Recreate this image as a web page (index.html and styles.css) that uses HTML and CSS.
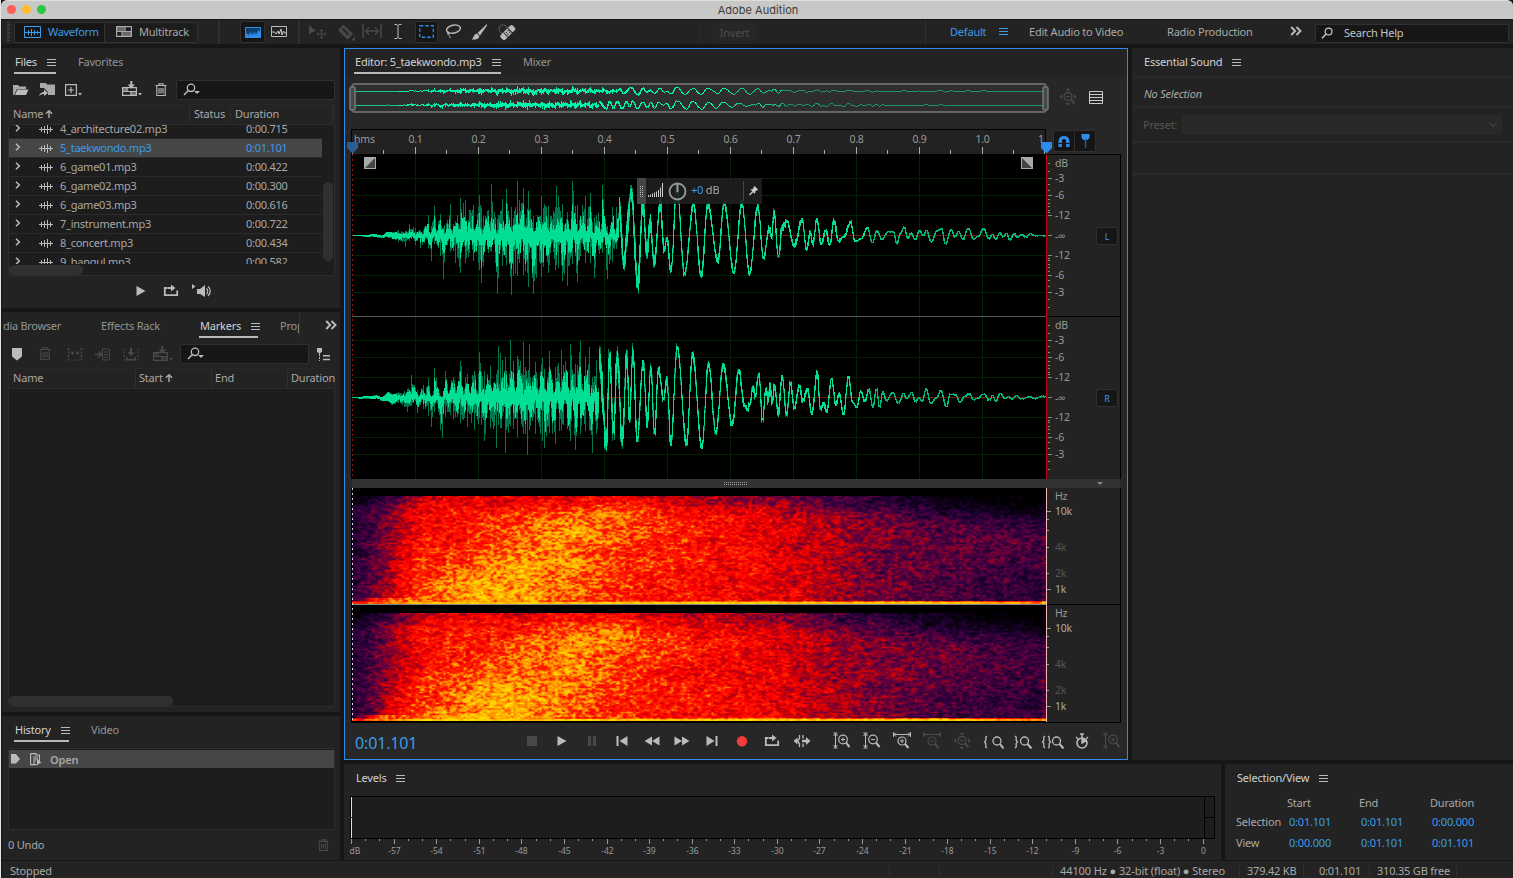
FILE: index.html
```
<!DOCTYPE html>
<html lang="en">
<head>
<meta charset="utf-8">
<title>Adobe Audition</title>
<link rel="stylesheet" href="styles.css">
</head>
<body>
<svg class="defs" aria-hidden="true">
  <symbol id="menu" viewBox="0 0 9 9"><path d="M0 1.5h9M0 4.5h9M0 7.5h9" stroke="currentColor"/></symbol>
  <symbol id="up" viewBox="0 0 9 10"><path d="M4.5 9.5V2M1 4.8 4.5 1.3 8 4.8" fill="none" stroke="currentColor" stroke-width="1.7"/></symbol>
  <symbol id="chev" viewBox="0 0 6 8"><path d="M1 .8 4.3 4 1 7.2" fill="none" stroke="currentColor" stroke-width="1.5"/></symbol>
  <symbol id="more" viewBox="0 0 12 10"><path d="M1.2 1l4 4-4 4M6.5 1l4 4-4 4" fill="none" stroke="currentColor" stroke-width="1.9"/></symbol>
  <symbol id="wave" viewBox="0 0 14 10"><path d="M0 5.5h14M2.5 3v5M5.5 2v7M8.5 1v9M11.5 3v5" stroke="currentColor" fill="none"/></symbol>
  <symbol id="search" viewBox="0 0 18 14"><circle cx="8" cy="4.800" r="3.700" fill="none" stroke="currentColor" stroke-width="1.3"/><path d="M5.300 7.500 1 12" stroke="currentColor" stroke-width="1.600"/></symbol>
  <symbol id="searchdrop" viewBox="0 0 18 14"><use href="#search" width="18" height="14"/><path d="M11 8h6l-3 3z" fill="currentColor"/></symbol>
  <symbol id="trash" viewBox="0 0 12 14"><path d="M.5 2.500h11M4 2V.7h4V2M1.800 3v9.500h8.400V3M4 5v5.500M6 5v5.500M8 5v5.500" fill="none" stroke="currentColor" stroke-width="1.100"/></symbol>
  <symbol id="tracks" viewBox="0 0 16 11"><path d="M.6.6h14.800v9.800H.6zM.6 5.500h14.800M9 .6v4.900M6 5.500v4.900" fill="none" stroke="currentColor" stroke-width="1.200"/><path d="M1 1h7.500v4H1zM6.500 6h8.500v4H6.500z" fill="currentColor" opacity=".55"/></symbol>
  <symbol id="insert" viewBox="0 0 20 16"><path d="M.6 6.600h13.800v7.800H.6zM.6 10.500h13.800M9 10.500v4M5 6.500v4" fill="none" stroke="currentColor" stroke-width="1.200"/><path d="M1 7h4v3H1zM9 11h5v3H9z" fill="currentColor" opacity=".5"/><path d="M8.300 0h2v3.500H13L9.300 7.500 5.600 3.500h2.700zM16 12h4l-2 2.500z" fill="currentColor"/></symbol>
  <symbol id="play" viewBox="0 0 16 16"><path d="M3.500 3v10L12.500 8z" fill="currentColor"/></symbol>
  <symbol id="loop" viewBox="0 0 16 16"><path d="M4.500 5H1.800v7.200h12.400V7.500M5 5h4" fill="none" stroke="currentColor" stroke-width="1.800"/><path d="M8 1.500v7L12.500 5z" fill="currentColor"/></symbol>
  <symbol id="mag" viewBox="0 0 18 18"><circle cx="10" cy="7.500" r="4.300" fill="none" stroke="currentColor" stroke-width="1.200"/><path d="M13 10.700 16.500 15" stroke="currentColor" stroke-width="2"/></symbol>
  <symbol id="vzin" viewBox="0 0 18 18"><use href="#mag" width="18" height="18"/><path d="M8 7.500h4M10 5.500v4M2.500 2v13M.5 4 2.500 1.500 4.500 4M.5 13l2 2.500 2-2.500M.5 1h4M.5 16h4" fill="none" stroke="currentColor"/></symbol>
  <symbol id="vzout" viewBox="0 0 18 18"><use href="#mag" width="18" height="18"/><path d="M8 7.500h4M2.500 2v13M.5 4 2.500 1.500 4.500 4M.5 13l2 2.500 2-2.500M.5 1h4M.5 16h4" fill="none" stroke="currentColor"/></symbol>
  <symbol id="hzin" viewBox="0 0 18 18"><circle cx="9" cy="9" r="4" fill="none" stroke="currentColor" stroke-width="1.200"/><path d="M7 9h4M9 7v4M1 2.500h16M3 .5 1 2.500l2 2M15 .5l2 2-2 2M.5 0v5M17.500 0v5" fill="none" stroke="currentColor"/><path d="M12 12l3.500 4" stroke="currentColor" stroke-width="2"/></symbol>
  <symbol id="hzout" viewBox="0 0 18 18"><circle cx="9" cy="9" r="4" fill="none" stroke="currentColor" stroke-width="1.200"/><path d="M7 9h4M1 2.500h16M3 .5 1 2.500l2 2M15 .5l2 2-2 2M.5 0v5M17.500 0v5" fill="none" stroke="currentColor"/><path d="M12 12l3.500 4" stroke="currentColor" stroke-width="2"/></symbol>
  <symbol id="zall" viewBox="0 0 18 18"><circle cx="9" cy="8.500" r="4" fill="none" stroke="currentColor" stroke-width="1.300"/><path d="M7 8.500h4" stroke="currentColor"/><path d="M12 11.500l3.500 4" stroke="currentColor" stroke-width="2"/><path d="M9 0l2.500 2.500h-5zM9 17.500l2.500-2.500h-5zM.5 8.500 3 6v5zM17.500 8.500 15 6v5z" fill="currentColor"/></symbol>
</svg>

<div class="window">
  <header class="titlebar"><span class="lights"><i class="red"></i><i class="yellow"></i><i class="green"></i></span><span class="title">Adobe Audition</span></header>

  <nav class="toolbar">
    <span class="grip"></span>
    <div class="modes">
      <button class="mode active"><svg width="17" height="12"><path d="M.5.500h16v11H.5zM1 6.500h15M4.500 4v5M7.500 3v7M10.500 4v5M13.500 5v3" fill="none" stroke="currentColor"/></svg>Waveform</button>
      <button class="mode"><svg width="16" height="11"><use href="#tracks"/></svg>Multitrack</button>
    </div>
    <span class="vsep wide"></span>
    <span class="tool on"><svg width="16" height="11"><path d="M0 0h16v11H0z" fill="#123a68"/><path d="M0 10.500V8l1-4 1 4 1-2 1 3 1-5 1 4 1-3 1 4 1-6 1 5 1-3 1 3 1-6 1 3 1-2 1 7z" fill="#2d8ceb"/><path d="M.5.500h15v10H.5z" fill="none" stroke="#2d8ceb"/></svg></span>
    <span class="tool"><svg class="raise" width="16" height="11"><path d="M.5.500h15v10H.5z" fill="none" stroke="#bbb"/><path d="M1 6h2.500l1.500 2 2-3 1 3 2-5 1 6 1.500-4 1 2H15" fill="none" stroke="#ccc"/></svg></span>
    <span class="vsep"></span>
    <span class="tool dim"><svg width="18" height="15"><path d="M1 0v10l2.500-2.500L8 6z" fill="currentColor"/><path d="M13.500 4.500v9M9 9h9M12 6l1.500-1.500L15 6M12 12l1.500 1.500L15 12M10.500 7.500 9 9l1.500 1.500M16.500 7.500 18 9l-1.500 1.500" stroke="currentColor" fill="none"/></svg></span>
    <span class="tool dim"><svg width="18" height="17"><path d="M1 6 6.500.8 16 10l-5.500 5.500z" fill="currentColor"/><path d="M5 5l2 .5.500 2 2 .5.500 2 2 .5" stroke="#232323" stroke-width="1.800" fill="none"/><path d="M14 16.500h4v-4z" fill="currentColor"/></svg></span>
    <span class="tool dim"><svg class="raise" width="20" height="14"><path d="M1 0v14M19 0v14" stroke="currentColor" stroke-width="1.500"/><path d="M4 7h12M7 3.500 3.500 7 7 10.500M13 3.500 16.500 7 13 10.500" stroke="currentColor" fill="none" stroke-width="1.300"/></svg></span>
    <span class="tool"><svg class="raise" width="8" height="15"><path d="M.5.500H3l1 1 1-1h2.500M.5 14.500H3l1-1 1 1h2.500M4 1v13" stroke="#bbb" fill="none"/></svg></span>
    <span class="tool on"><svg class="raise" width="15" height="13"><path d="M.75.750h13.500v11.500H.75z" fill="none" stroke="#2d8ceb" stroke-width="1.300" stroke-dasharray="3.500 2"/></svg></span>
    <span class="tool"><svg class="raise" width="17" height="15"><ellipse cx="8.500" cy="5" rx="7" ry="4" transform="rotate(-12 9 5)" fill="none" stroke="#bbb" stroke-width="1.400"/><path d="M3.500 8c-2 1-1 3 .5 2 1-1-.5-2-1-.5 0 2 2 1 2 4.500" fill="none" stroke="#bbb"/></svg></span>
    <span class="tool"><svg width="17" height="16"><path d="M16 0 6.500 9l2.500 2.500L16 1.500z" fill="#bbb"/><path d="M5.800 9.500 8.300 12c0 3-4 4-8 3.500 2.500-1 2-5 5.500-6z" fill="#bbb"/></svg></span>
    <span class="tool"><svg width="18" height="17"><g transform="rotate(-45 10 8)"><rect x="1" y="5" width="17" height="6.500" rx="2" fill="#bbb"/><path d="M6.500 4.500V12M12.500 4.500V12" stroke="#232323"/><path d="M8 7h1M10.500 7h1M8 9.500h1M10.500 9.500h1" stroke="#232323" stroke-width="1.400"/></g><circle cx="5" cy="5" r="4" fill="none" stroke="#bbb" stroke-dasharray="1 1.500"/></svg></span>
    <span class="vsep faint"></span>
    <span class="invert">Invert</span>
    <span class="vsep s2"></span>
    <span class="ws blue">Default</span>
    <svg class="blue raise" width="9" height="9"><use href="#menu"/></svg>
    <span class="ws">Edit Audio to Video</span>
    <span class="ws">Radio Production</span>
    <svg class="lt raise" width="12" height="10"><use href="#more"/></svg>
    <label class="field help"><svg width="17" height="13"><use href="#search"/></svg><span>Search Help</span></label>
  </nav>

  <main class="workspace">
    <div class="left">
      <section class="panel files">
        <div class="tabs"><span class="tab current t1">Files<svg width="9" height="9"><use href="#menu"/></svg></span><span class="tab t2">Favorites</span></div>
        <div class="tools files-tools">
          <svg width="16" height="12"><path d="M0 11V1h5l1.500 1.500H13V5H4L1 11z" fill="#aaa"/><path d="M4.500 5.500H15.500L13 11H1.800z" fill="#bbb"/></svg>
          <svg width="17" height="14"><path d="M1 0h6l1 1.500h8V12H9V9L5 5H1z" fill="#aaa"/><path d="M0 13c1-3 3-4 5-4V6.500l4 3.500-4 3v-2c-2 0-3 .5-5 2z" fill="#bbb"/></svg>
          <svg width="18" height="13"><path d="M.6.600h10.800v10.800H.6zM3 6h6M6 3v6" stroke="#bbb" fill="none" stroke-width="1.200"/><path d="M13 9h4l-2 2.500z" fill="#bbb"/></svg>
          <svg width="20" height="16"><use href="#insert"/></svg>
          <svg width="12" height="14"><use href="#trash"/></svg>
          <span class="field"><svg width="18" height="14"><use href="#searchdrop"/></svg></span>
        </div>
        <div class="thead fh"><span>Name <svg width="9" height="10"><use href="#up"/></svg></span><span>Status</span><span>Duration</span><span></span></div>
        <div class="list filelist">
          <div class="rows" id="rows"></div>
          <i class="vthumb"></i><i class="hthumb"></i>
        </div>
        <div class="preview"><svg width="16" height="16"><use href="#play"/></svg><svg width="16" height="16"><use href="#loop"/></svg><svg width="20" height="16"><path d="M0 1v5l3.500-2.500zM5 6h3l5-4v12L8 11H5z" fill="#bbb"/><path d="M14.500 5.500c1.500 1.500 1.500 4 0 5.500M16 3.500c3 2.500 3 6.500 0 9.500" stroke="#bbb" fill="none" stroke-width="1.300"/></svg></div>
      </section>

      <section class="panel markers">
        <div class="tabs mtabs"><span class="tab m1">dia Browser</span><span class="tab m2">Effects Rack</span><span class="tab current m3">Markers<svg width="9" height="9"><use href="#menu"/></svg></span><span class="tab m4">Properties</span><svg class="lt" width="12" height="10"><use href="#more"/></svg></div>
        <div class="tools marker-tools">
          <svg width="10" height="14"><path d="M0 1h10v8.500L5 13.500 0 9.500z" fill="#bbb"/></svg>
          <svg class="dim" width="12" height="16"><use href="#trash"/></svg>
          <svg class="dim" width="16" height="13"><path d="M1.500 0v13M14.500 0v13" stroke="currentColor" stroke-width="1.500" stroke-dasharray="2 1.500"/><path d="M4 4h3L5.500 7zM9 4h3l-1.500 3zM4 12h9" stroke="currentColor" fill="currentColor" stroke-dasharray="1 1"/></svg>
          <svg class="dim" width="15" height="13"><path d="M0 6.500h6M3.500 3.500l3 3-3 3" stroke="currentColor" stroke-width="1.500" fill="none"/><path d="M7.500 1h7v11h-7zM9 4h4M9 6.500h4M9 9h4" stroke="currentColor" fill="none"/></svg>
          <svg class="dim" width="16" height="13"><path d="M1 0v13M15 0v13" stroke="currentColor" stroke-dasharray="2 1.500"/><path d="M7 0h2v4h2.500L8 8 4.500 4H7zM3 9h1.500v2h7V9H13v3.500H3z" fill="currentColor"/></svg>
          <svg class="dim" width="20" height="16"><use href="#insert"/></svg>
          <span class="field"><svg width="18" height="14"><use href="#searchdrop"/></svg></span>
          <svg width="14" height="14"><path d="M0 1h5v3.500L2.500 7 0 4.500z" fill="#bbb"/><path d="M2.500 7v7" stroke="#bbb" stroke-dasharray="2 1"/><path d="M6 8.800h7M6 12.500h7" stroke="#bbb" stroke-width="1.600"/></svg>
        </div>
        <div class="thead mh"><span>Name</span><span>Start <svg width="9" height="10"><use href="#up"/></svg></span><span>End</span><span>Duration</span></div>
        <div class="list grow"><i class="hthumb long"></i></div>
      </section>

      <section class="panel history">
        <div class="tabs"><span class="tab current h1">History<svg width="9" height="9"><use href="#menu"/></svg></span><span class="tab h2">Video</span></div>
        <div class="list hist"><div class="hrow"><svg width="9" height="10"><path d="M0 0h5l4 5-4 4.500H0z" fill="#bbb"/></svg><svg width="12" height="13"><path d="M.6.600H6V2h3.500v6M.6.600v11h6M3 4h5M3 6h5M3 8h3M3 10h2" fill="none" stroke="#bbb" stroke-width="1.100"/><path d="M7 5.500v7l2-2 2.500-.5z" fill="#bbb"/></svg><b>Open</b></div></div>
        <div class="undo"><span>0 Undo</span><svg class="dim" width="11" height="13"><use href="#trash"/></svg></div>
      </section>
    </div>

    <div class="right">
      <div class="upper">
        <section class="panel editor">
          <div class="tabs etabs"><span class="tab current e1">Editor: 5_taekwondo.mp3<svg width="9" height="9"><use href="#menu"/></svg></span><span class="tab e2">Mixer</span></div>
          <div class="stage">
            <div class="overview"><canvas id="overview" width="700" height="53"></canvas><svg class="dim" width="18" height="18"><use href="#zall"/></svg><svg width="14" height="13"><path d="M.5.500h13v12H.5zM0 3.500h14M0 6.500h14M0 9.500h14" fill="none" stroke="#ccc"/></svg></div>
            <div class="ruler"><svg id="ruler" width="695" height="25"></svg>
              <span class="snap"><svg width="12" height="13"><path d="M2.200 12V6.200a3.800 3.800 0 0 1 7.600 0V12" fill="none" stroke="#2d8ceb" stroke-width="3.400"/><path d="M.5 8.500h3.500M8 8.500h3.500" stroke="#161616"/></svg></span><span class="snap"><svg width="9" height="14"><path d="M.5 0h8v4l-2 2h-4l-2-2z" fill="#2d8ceb"/><path d="M4.500 5v9" stroke="#2262a0" stroke-width="1.400"/></svg></span>
              <svg class="cap start" width="11" height="12"><path d="M0 0h11v6l-5.500 5.500L0 6z" fill="#2c5c92"/></svg><svg class="cap end" width="11" height="12"><path d="M0 0h11v6l-5.500 5.500L0 6z" fill="#2d8ceb"/></svg>
            </div>
            <div class="waves"><canvas id="waves" width="695" height="325"></canvas>
              <div class="scale"><svg id="db" width="73" height="325"></svg><span class="chan cl">L</span><span class="chan cr">R</span></div>
              <svg class="fade fl" width="12" height="12"><path d="M0 0h12v12H0z" fill="#aaa"/><path d="M11 1v10H1z" fill="#444"/></svg>
              <svg class="fade fr" width="12" height="12"><path d="M0 0h12v12H0z" fill="#aaa"/><path d="M1 1v10h10z" fill="#444"/></svg>
              <div class="hud"><span class="hudgrip"><i></i></span><svg width="16" height="15"><path d="M.5 14v-2M2.500 14v-2.500M4.500 14v-3.500M6.500 14v-4.500M8.500 14V8.500M10.500 14V7M12.500 14V4.500M14.500 14V0" stroke="#ccc"/></svg><svg width="19" height="19"><circle cx="9.500" cy="9.500" r="8" fill="none" stroke="#999" stroke-width="1.800"/><path d="M9.500 2v8" stroke="#999" stroke-width="2"/></svg><span class="gain"><em>+0</em> dB</span><i class="hudsep"></i><svg width="9" height="10"><path d="M5.500 0 9 3.500 8 4.500 6.500 5 6 8 1.500 3.500 4 3 4.700 1z" fill="#ccc"/><path d="M4 5.500.5 9" stroke="#ccc" stroke-width="1.300"/></svg></div>
            </div>
            <div class="splitter"><i></i><b></b></div>
            <div class="spectra"><canvas id="spectra" width="695" height="234"></canvas><svg id="hz" width="73" height="234"></svg></div>
            <div class="transport">
              <span class="time">0:01.101</span>
              <svg class="dim" width="16" height="16"><path d="M3 3h10v10H3z" fill="currentColor"/></svg>
              <svg width="16" height="16"><use href="#play"/></svg>
              <svg class="dim" width="16" height="16"><path d="M4 3h3v10H4zM9 3h3v10H9z" fill="currentColor"/></svg>
              <svg width="16" height="16"><path d="M2.500 3h2v10h-2zM13.500 3v10L5.500 8z" fill="currentColor"/></svg>
              <svg width="16" height="16"><path d="M8 3.500v9L.5 8zM15.500 3.500v9L8 8z" fill="currentColor"/></svg>
              <svg width="16" height="16"><path d="M.5 3.500v9L8 8zM8 3.500v9L15.500 8z" fill="currentColor"/></svg>
              <svg width="16" height="16"><path d="M11.500 3h2v10h-2zM2.500 3v10l8-5z" fill="currentColor"/></svg>
              <svg width="16" height="16"><circle cx="8" cy="8.300" r="5.200" fill="#f33b3b"/></svg>
              <svg width="16" height="16"><use href="#loop"/></svg>
              <svg width="18" height="16"><path d="M6.500 2v3.500L4.500 8l2 2.500V14M10 2v3.500M10 10.500V14" stroke="currentColor" fill="none" stroke-width="1.300"/><path d="M.5 8 4.500 4.500v7zM17.500 8 13 4v2.800H9v2.400h4V12z" fill="currentColor"/></svg>
              <svg class="zoomfirst" width="18" height="18"><use href="#vzin"/></svg>
              <svg width="18" height="18"><use href="#vzout"/></svg>
              <svg width="18" height="18"><use href="#hzin"/></svg>
              <svg class="dim" width="18" height="18"><use href="#hzout"/></svg>
              <svg class="dim" width="18" height="18"><use href="#zall"/></svg>
              <svg width="21" height="16"><circle cx="14" cy="8" r="4" fill="none" stroke="currentColor" stroke-width="1.300"/><path d="M17 11l3.500 4.500" stroke="currentColor" stroke-width="2"/><path d="M4 3 2.800 4v3.500L1.500 9l1.300 1.500V14L4 15" stroke="currentColor" fill="none" stroke-width="1.300"/></svg>
              <svg width="20" height="16"><circle cx="11.500" cy="8" r="4" fill="none" stroke="currentColor" stroke-width="1.300"/><path d="M14.500 11l4 4.500" stroke="currentColor" stroke-width="2"/><path d="M2 3l1.200 1v3.500L4.500 9l-1.300 1.500V14L2 15" stroke="currentColor" fill="none" stroke-width="1.300"/></svg>
              <svg width="23" height="16"><circle cx="15.500" cy="8" r="4" fill="none" stroke="currentColor" stroke-width="1.300"/><path d="M18.500 11l4 4.500" stroke="currentColor" stroke-width="2"/><path d="M4 3 2.800 4v3.500L1.500 9l1.300 1.500V14L4 15M7 3l1.200 1v3.500L9.500 9l-1.300 1.500V14L7 15" stroke="currentColor" fill="none" stroke-width="1.300"/></svg>
              <svg width="16" height="17"><circle cx="8" cy="10" r="5" fill="none" stroke="currentColor" stroke-width="1.600"/><path d="M6 1h4M8 1v4M8 10V5.500L12 8zM2 4l2 2M14 4l-2 2" stroke="currentColor" fill="currentColor" stroke-width="1.400"/></svg>
              <svg class="dim" width="18" height="18"><use href="#vzin"/></svg>
            </div>
          </div>
        </section>
        <section class="panel essential">
          <div class="tabs"><span class="tab current plain">Essential Sound<svg width="9" height="9"><use href="#menu"/></svg></span></div>
          <div class="nosel">No Selection</div>
          <div class="preset"><span>Preset:</span><span class="select"><svg width="8" height="6"><path d="M.5.500 4 4.500 7.500.5" fill="none" stroke="#484848"/></svg></span></div>
          <div class="rest"></div>
        </section>
      </div>
      <div class="lower">
        <section class="panel levels">
          <div class="tabs"><span class="tab current plain">Levels<svg width="9" height="9"><use href="#menu"/></svg></span></div>
          <div class="meter"><div class="bars"><i></i><i></i></div><div class="clips"><i></i><i></i></div></div>
          <svg id="levels" width="877" height="21"></svg>
        </section>
        <section class="panel selview">
          <div class="tabs"><span class="tab current plain">Selection/View<svg width="9" height="9"><use href="#menu"/></svg></span></div>
          <div class="svgrid"><span></span><span>Start</span><span>End</span><span>Duration</span>
            <span>Selection</span><em>0:01.101</em><em>0:01.101</em><em>0:00.000</em>
            <span>View</span><em>0:00.000</em><em>0:01.101</em><em>0:01.101</em></div>
        </section>
      </div>
    </div>
  </main>
  <footer class="status"><span>Stopped</span><i></i><i></i><i></i><span class="format">44100 Hz ● 32-bit (float) ● Stereo</span><i></i><span>379.42 KB</span><i></i><span>0:01.101</span><i></i><span>310.35 GB free</span><i></i></footer>
</div>
<script src="app.js"></script>
</body>
</html>
```

FILE: styles.css
```
* { box-sizing: border-box; }
body { margin: 0; width: 1513px; height: 878px; overflow: hidden; background: #171717; font: 11px/14px "Noto Sans", "Open Sans", sans-serif; letter-spacing: -.2px; color: #a8a8a8; }
svg, canvas { display: block; flex: none; }
i, em { font-style: normal; }
.defs { position: absolute; width: 0; height: 0; }
.window { width: 1513px; height: 878px; display: flex; flex-direction: column; border-left: 1px solid #e6e6e6; background: #171717; overflow: hidden; }
.titlebar { height: 19px; margin-bottom: 1px; padding-bottom: 1px; flex: none; display: grid; grid-template-columns: 60px 1fr 60px; align-items: center; background: #c8c8c6; border-top: 1px solid #dededc; border-radius: 6px 6px 0 0; }
.lights { display: flex; gap: 6px; padding-left: 6px; }
.lights i { width: 9px; height: 9px; border-radius: 50%; }
.red { background: #ff5f57; } .yellow { background: #febc2e; } .green { background: #28c840; }
.title { text-align: center; color: #3c3c3c; font: 11px/14px Inter, sans-serif; letter-spacing: .05px; padding-left: 2px; }
.blue { color: #3c9be6; } .lt { color: #bbb; } .dim { color: #494949; }

.toolbar { height: 24px; flex: none; margin: 0 0 4px 1px; background: #232323; display: grid; align-items: center;
  grid-template-columns: 12px 184px 42px 25px 28px 12px 24px 34px 18px 34px 23px 30px 22px 34px 182px 57px 187px 49px 30px 138px 123px 25px 1fr; }
.toolbar > * { min-width: 0; }
.raise { margin-bottom: 2px; }
.grip { width: 3px; height: 20px; margin-left: 5px; background: repeating-linear-gradient(#444 0 1px, transparent 1px 2px); }
.modes { display: flex; height: 21px; border: 1px solid #323232; border-radius: 2px; }
.mode { width: 90px; flex: none; display: flex; align-items: center; gap: 7px; padding: 0 0 1px 9px; border: 0; background: #1d1d1d; font: inherit; font-size: 11px; letter-spacing: -.2px; color: #a8a8a8; }
.mode.active { background: #161616; border-right: 1px solid #323232; color: #3c9be6; letter-spacing: -.3px; }
.mode + .mode { width: 92px; padding-left: 11px; }
.vsep { width: 2px; height: 24px; background: #2f2f2f; justify-self: center; }
.vsep.faint { justify-self: end; margin-right: 6px; width: 1px; background: #292929; }
.vsep.s2 { justify-self: end; margin-right: 24px; width: 1px; }
.tool { height: 22px; display: flex; align-items: center; justify-content: center; }
.tool.on { background: #151515; border: 1px solid #303030; border-radius: 2px; }
.invert { height: 18px; margin: 0 5px; border-radius: 9px; background: #272727; text-align: center; line-height: 19px; color: #4c4c4c; }
.ws { white-space: nowrap; }
.field { display: flex; align-items: center; height: 20px; background: #161616; border: 1px solid #303030; border-radius: 2px; padding-left: 6px; color: #bbb; }
.help { height: 19px; margin-right: 4px; gap: 6px; padding: 0 0 0 5px; margin-top: 2px; color: #c4c4c4; }

.workspace { flex: none; height: 812px; display: flex; gap: 4px; margin-left: 1px; }
.panel { background: #232323; display: flex; flex-direction: column; overflow: hidden; }
.left { width: 338px; display: flex; flex-direction: column; gap: 4px; flex: none; }
.files { height: 260px; } .markers { height: 400px; } .history { height: 144px; }
.tabs { height: 28px; flex: none; display: flex; align-items: stretch; white-space: nowrap; padding-left: 12px; }
.tab { height: 26px; padding: 7px 1px 0; display: flex; gap: 10px; color: #939393; }
.tab svg { margin-top: 3px; color: #bbb; }
.current { color: #d2d2d2; border-bottom: 2px solid #bababa; }
.plain { border: 0; padding-left: 0; }
.t1 { width: 42px; justify-content: space-between; } .t2 { margin-left: 21px; }
.tools { align-items: center; height: 28px; flex: none; color: #bbb; }
.tools .field { width: 100%; }
.files-tools { display: flex; padding-left: 11px; }
.files-tools > :nth-child(2) { margin-left: 10px; }
.files-tools > :nth-child(3) { margin-left: 9px; }
.files-tools > :nth-child(4) { margin: -2px 0 0 39px; }
.files-tools > :nth-child(5) { margin-left: 13px; }
.files-tools .field { width: 159px; margin-left: 9px; }
.thead { margin: 0 5px 0 6px; height: 20px; flex: none; display: grid; align-items: center; border: 1px solid #282828; border-bottom: 0; }
.thead span { padding-left: 4px; height: 17px; line-height: 17px; display: flex; gap: 2px; align-items: center; border-right: 1px solid #2f2f2f; padding-bottom: 2px; }
.thead span:last-child { border: 0; }
.thead svg { width: 8px; }
.fh { grid-template-columns: 181px 41px 102px 1fr; }
.mh { grid-template-columns: 127px 76px 76px 1fr; }
.mh span + span { padding-left: 3px; }
.list { position: relative; margin: 0 5px 0 6px; background: #1d1d1d; border: 1px solid #2d2d2d; border-radius: 2px; overflow: hidden; }
.filelist { height: 152px; flex: none; }
.rows { height: 139px; overflow: hidden; width: 313px; }
.row { height: 19px; display: grid; grid-template-columns: 24px 21px 186px 1fr; align-items: center; border-bottom: 1px solid #2b2b2b; padding-left: 6px; white-space: nowrap; line-height: 18px; letter-spacing: -.25px; }
.row:first-child { margin-top: -5px; }
.row.sel { background: #464646; color: #3c9be6; }
.row svg { color: #bbb; } .row svg:first-child { margin-top: -3px; }
.vthumb { position: absolute; right: 1px; top: 57px; width: 10px; height: 79px; border-radius: 5px; background: #303030; }
.hthumb { position: absolute; left: 0; bottom: 0; width: 74px; height: 10px; border-radius: 5px; background: #303030; }
.long { width: 164px; }
.preview { display: flex; gap: 14px; padding: 7px 0 0 131px; color: #bbb; }
.preview > :last-child { margin-left: -1px; }
.mtabs { padding: 0; position: relative; }
.m1 { width: 98px; padding-left: 1px; letter-spacing: -.3px; } .m2 { width: 99px; } .m3 { width: 59px; justify-content: space-between; } .m4 { width: 21px; margin-left: 21px; padding-right: 0; overflow: hidden; margin-right: 24px; }
.m3 svg { margin-right: 1px; }
.mtabs > svg { margin: 8px 0 0 1px; }
.mtabs .m4 { border-right: 1px solid #303030; }
.marker-tools { display: grid; justify-items: center; grid-template-columns: 28px 28px 31px 25px 31px 33px 130px 29px; justify-content: start; padding-left: 1px; }
.marker-tools .field { margin-left: 1px; width: 129px; }
.grow { flex: 1; margin-bottom: 5px; }
.h1 { width: 55px; justify-content: space-between; } .h2 { margin-left: 21px; }
.hist { height: 82px; margin-top: 4px; }
.hrow { margin-top: 1px; height: 18px; display: flex; align-items: center; background: #464646; padding-left: 2px; gap: 10px; }
.hrow b { font-weight: 600; font-size: 11px; margin: 2px 0 0 -2px; }
.undo { display: flex; justify-content: space-between; align-items: center; padding: 8px 11px 0 6px; }

.right { width: 1169px; flex: none; display: flex; flex-direction: column; gap: 4px; }
.upper { height: 712px; display: flex; gap: 4px; }
.editor { width: 784px; border: 1px solid #2d8ceb; flex: none; }
.etabs { height: 27px; padding-left: 9px; }
.etabs .tab { height: 25px; padding-top: 6px; letter-spacing: -.23px; }
.e1 { width: 147px; justify-content: space-between; } .e2 { margin-left: 21px; }
.stage { background: #272727; flex: 1; }
.overview { display: flex; padding-left: 4px; }
.overview svg:nth-child(2) { margin: 12px 0 0 10px; } .overview svg:nth-child(3) { margin: 15px 0 0 12px; }
.ruler { margin-left: 6px; display: flex; position: relative; height: 25px; }
#ruler { border: 1px solid #000; border-width: 1px 1px 0 1px; background: #222; }
.snap { width: 22px; height: 22px; margin: 1px 0 0 7px; background: #151515; border: 1px solid #303030; border-radius: 2px; display: flex; align-items: center; justify-content: center; }
.snap + .snap { margin-left: -1px; }
.cap { position: absolute; top: 13px; } .cap.start { left: -4px; } .cap.end { left: 690px; }
.waves, .spectra { margin-left: 6px; display: flex; position: relative; border-left: 1px solid #000; }
.scale { position: relative; border-right: 1px solid #000; border-top: 1px solid #000; height: 325px; background: #232323; }
.chan { position: absolute; left: 49px; width: 22px; height: 18px; border: 1px solid #303030; border-radius: 2px; background: #161616; color: #3c9be6; font-size: 9px; line-height: 17px; text-align: center; }
.cl { top: 72px; } .cr { top: 234px; }
.fade { position: absolute; top: 3px; } .fl { left: 12px; } .fr { left: 669px; }
.hud { position: absolute; left: 285px; top: 24px; width: 125px; height: 26px; background: rgba(32,32,32,.88); display: flex; align-items: center; }
.hudgrip { width: 9px; height: 26px; background: #444; padding: 8px 3px; margin-right: 2px; }
.hudgrip i { display: block; width: 3px; height: 11px; background: linear-gradient(90deg, transparent 1px, #444 1px 2px, transparent 2px), repeating-linear-gradient(#bbb 0 1px, transparent 1px 2px); }
.hud svg:nth-of-type(1) { margin-top: -2px; }
.hud svg:nth-of-type(2) { margin-left: 4px; }
.gain { margin: -2px 0 0 4px; width: 52px; white-space: nowrap; } .gain em { color: #3c9be6; }
.hudsep { width: 1px; height: 20px; background: #444; margin-right: 5px; }
.splitter { margin-left: 7px; width: 768px; height: 9px; background: #333; display: flex; align-items: center; }
.splitter i { width: 24px; height: 3px; margin-left: 372px; background: linear-gradient(transparent 1px, #333 1px 2px, transparent 2px), repeating-linear-gradient(90deg, #999 0 1px, transparent 1px 2px); }
.splitter b { margin-left: 349px; border: 3px solid transparent; border-top-color: #888; border-bottom: 0; }
.spectra { width: 770px; border: 1px solid #000; border-top: 0; background: #232323; height: 235px; }
.transport { height: 36px; padding-left: 10px; display: grid; align-items: center; justify-items: center; color: #bbb;
  grid-template-columns: 162px repeat(9, 30px) 30px 40px repeat(4, 30px) 32px 28px repeat(3, 30px); }
.zoomfirst { justify-self: end; margin-right: 6px; }
.time { justify-self: start; font-size: 16px; letter-spacing: -.15px; color: #3c9be6; margin-top: 4px; }
.essential { width: 381px; }
.essential .tabs, .levels .tabs, .selview .tabs { padding-left: 12px; }
.nosel { height: 32px; margin: 0 1px; border: solid #2b2b2b; border-width: 2px 0; padding: 9px 0 0 11px; font-style: italic; line-height: 14px; }
.preset { height: 35px; display: flex; align-items: center; justify-content: space-between; padding: 0 11px; border-bottom: 2px solid #2b2b2b; color: #555; }
.select { width: 320px; height: 20px; background: #292929; display: flex; align-items: center; justify-content: flex-end; padding-right: 5px; }
.rest { height: 32px; border-bottom: 2px solid #2b2b2b; }
.lower { height: 96px; display: flex; gap: 4px; }
.levels { width: 877px; } .selview { width: 288px; }
.levels .tabs, .selview .tabs { height: 32px; }
.meter { height: 43px; width: 865px; margin-left: 6px; border: 1px solid #000; background: #1d1d1d; display: flex; justify-content: space-between; }
.bars i { display: block; width: 1px; height: 20px; background: #e8e8b0; margin-bottom: 1px; }
.clips { width: 10px; border-left: 1px solid #000; display: flex; flex-direction: column; } .clips i { height: 20px; } .clips i:first-child { border-bottom: 1px solid #000; height: 21px; }
.svgrid { display: grid; grid-template: 18px 20px 21px / 53px 72px 71px 70px; align-items: center; padding-left: 11px; margin-top: -2px; white-space: nowrap; }
.svgrid > :nth-child(-n+4) { transform: translateX(-2px); }
.svgrid em { color: #3c9be6; }
.status { flex: 1; background: #232323; margin: 1px 0 0 1px; display: grid; align-items: center; white-space: nowrap; grid-template-columns: 878px 50px 113px 9px 178px 9px 55px 17px 49px 9px 78px 20px; padding: 2px 0 0 8px; }
.status i { width: 1px; height: 12px; background: #303030; margin-left: 1px; }
.format { letter-spacing: -.1px; }
.ruletext { fill: #999; font-size: 10.5px; }
```

FILE: app.js
```
const NS = 'http://www.w3.org/2000/svg';
function el(parent, name, attrs, text) {
  const n = document.createElementNS(NS, name);
  for (const k in attrs) n.setAttribute(k, attrs[k]);
  if (text !== undefined) n.textContent = text;
  parent.appendChild(n);
  return n;
}
let seed = 12345;
function rnd() { seed = (seed * 1664525 + 1013904223) >>> 0; return seed / 4294967296; }

// File list
document.getElementById('rows').innerHTML = [
  ['4_architecture02.mp3', '0:00.715'], ['5_taekwondo.mp3', '0:01.101'], ['6_game01.mp3', '0:00.422'],
  ['6_game02.mp3', '0:00.300'], ['6_game03.mp3', '0:00.616'], ['7_instrument.mp3', '0:00.722'],
  ['8_concert.mp3', '0:00.434'], ['9_hangul.mp3', '0:00.582']
].map((r, i) => `<div class="row${i === 1 ? ' sel' : ''}"><svg width="6" height="8"><use href="#chev"/></svg><svg width="14" height="10"><use href="#wave"/></svg><span>${r[0]}</span><span>${r[1]}</span></div>`).join('');

// Time ruler
const ruler = document.getElementById('ruler');
for (let k = 0; k <= 22; k++) {
  const x = Math.round(k * 31.475) + .5;
  el(ruler, 'path', { d: `M${x} ${k % 2 ? 20 : 17}V25`, stroke: '#aaa' });
  if (k && k % 2 === 0) el(ruler, 'text', { x: k === 22 ? 686 : x, y: 13, 'text-anchor': k === 22 ? 'start' : 'middle', class: 'ruletext' }, k === 22 ? '1.1' : (k / 20).toFixed(1));
}
el(ruler, 'text', { x: 2, y: 13, class: 'ruletext' }, 'hms');

// Amplitude scale
const db = document.getElementById('db');
for (const top of [0, 162]) {
  el(db, 'text', { x: 8, y: top + 12, class: 'ruletext' }, 'dB');
  const c = top + 80.5;
  for (const s of [-1, 1]) for (let d = 1; d <= 12; d++) {
    const y = Math.round(c - .5 + s * 80.5 * Math.pow(10, -d / 20)) + .5, major = [3, 6, 12].includes(d);
    el(db, 'path', { d: `M1 ${y}h${major ? 4 : 2}`, stroke: '#888' });
    if (major) el(db, 'text', { x: 8, y: y + 3.5, class: 'ruletext' }, '-' + d);
  }
  el(db, 'path', { d: `M1 ${c}h4`, stroke: '#888' });
  el(db, 'text', { x: 8, y: c + 4, class: 'ruletext' }, '-∞');
}
el(db, 'path', { d: 'M0 161.500h74', stroke: '#000' });

// Frequency scale
const hz = document.getElementById('hz');
for (const top of [0, 117]) {
  for (const [y, t, c] of [[8, 'Hz', '#999'], [23, '10k', '#aaa'], [59, '4k', '#555'], [85, '2k', '#555'], [101, '1k', '#aaa']]) {
    el(hz, 'text', { x: 8, y: top + y + 4, class: 'ruletext', style: `fill:${c}` }, t);
    if (y > 8) el(hz, 'path', { d: `M0 ${top + y + .5}h${c === '#aaa' ? 4 : 2}`, stroke: '#999' });
  }
  el(hz, 'path', { d: `M0 ${top + 31.5}h2M0 ${top + 42.5}h2`, stroke: '#999' });
}
el(hz, 'path', { d: 'M0 116.500h74', stroke: '#000' });

// Level meter scale
const lv = document.getElementById('levels');
for (let d = 0; d <= 60; d++) {
  const x = Math.round(858.5 - d * 14.19) + .5;
  el(lv, 'path', { d: `M${x} 0v${d % 3 ? 2 : 5}`, stroke: '#999' });
  if (d % 3 === 0) el(lv, 'text', { x: d === 60 ? 11 : x, y: 15, 'text-anchor': 'middle', class: 'ruletext', style: 'font-size:8.5px;letter-spacing:0' }, d === 60 ? 'dB' : d ? '-' + d : '0');
}

// Waveform: dense attack stored as [x, top, bottom], tail as [x, y], all in thirds of a pixel
const dense = [
  [22,481,484,75,478,486,85,475,487,110,483,492,125,467,487,145,470,495,160,465,500,180,470,515,193,447,495,210,460,508,225,465,515,248,420,515,257,460,560,268,390,500,285,420,540,293,460,622,298,450,540,315,393,530,330,440,560,345,375,590,360,380,560,385,395,555,400,400,560,403,348,590,407,400,625,415,430,560,438,335,530,450,430,560,455,440,665,460,420,590,470,380,570,482,345,560,497,400,657,510,400,590,517,315,600,522,380,560,535,345,600,550,355,630,565,430,648,588,370,600,610,400,590,630,400,580,634,320,560,640,380,580,650,390,610,665,420,628,680,322,560,697,400,620,720,370,560,735,360,560,747,430,605,772,335,530,785,460,610,800,400,560,812,400,520],
  [22,246,249,60,242,252,95,238,250,110,248,262,128,224,262,140,235,275,160,230,262,185,225,290,199,180,270,215,225,290,235,210,280,250,190,300,257,250,335,268,155,285,290,250,370,300,170,300,325,190,310,346,140,320,365,180,330,388,170,340,400,180,320,403,87,300,407,170,320,417,170,370,436,155,330,453,180,390,458,140,320,460,57,330,464,120,330,480,130,405,495,83,330,505,150,340,515,130,360,535,85,350,547,200,415,552,95,340,570,145,350,590,130,370,598,170,395,612,115,350,630,160,380,648,110,340,674,90,370,690,150,395,706,82,350,720,130,340,733,100,340,742,200,415,752,140,350]
];
const tail = [
  [[820,375,835,560,858,365,878,630,893,380,905,540,915,440,927,570,945,385,957,530,965,490,977,590,995,335,1018,600,1045,390,1068,605,1088,390,1118,560,1137,385,1166,595],[5,385,28,598,53,395,70,552,87,460,95,490,101,408,115,550,125,460,140,440,162,515,186,435,199,525,210,472,218,510,230,432,243,510,257,468,269,512,281,437,295,500,312,485,331,443,345,500,365,490,381,458,397,505,410,467,425,495,445,470,460,472,470,508,480,478,492,457,503,492,512,475,525,495,538,466,549,484,559,466,573,502,590,468,604,462,616,508,633,464,645,487,655,470,668,494,684,460,700,492,712,487,731,462,745,492,757,480,767,494,779,474,790,487,799,475,809,494,823,476,832,488,845,479,858,487,870,478,890,483,918,483]],
  [[760,120,784,380,793,115,805,355,816,120,831,380,845,120,853,320,863,105,876,380,894,140,906,330,917,155,928,360,940,160,955,255,965,190,977,390,996,95,1024,388,1042,118,1070,398,1090,145,1112,355,1134,150,1161,330,1181,165],[12,270,22,285,30,265,38,215,45,245,56,175,67,322,77,220,84,260,89,210,96,265,103,210,114,298,126,182,139,303,151,203,162,280,178,212,187,260,202,222,215,298,231,172,241,285,250,265,260,290,274,190,287,270,297,235,310,300,325,185,337,262,350,277,362,228,374,260,386,222,398,277,409,220,418,278,428,230,439,257,457,233,475,265,490,235,500,250,515,233,526,260,535,248,546,258,558,222,571,265,590,248,602,226,619,276,630,237,645,238,660,262,673,245,687,235,700,256,710,250,731,237,748,256,757,242,767,260,779,236,795,250,805,246,815,252,829,241,842,252,868,245,885,250,908,243,918,246]]
];
const center = [482, 247];
// Each column is [outerTop, outerBottom, coreTop, coreBottom] in px around the zero line
function columns(ch) {
  const cols = [], e = [], p = [];
  for (let i = 0; i < dense[ch].length; i += 3) e.push([dense[ch][i] / 3 - 7, (dense[ch][i + 1] - center[ch]) / 3, (dense[ch][i + 2] - center[ch]) / 3]);
  tail[ch].forEach((t, s) => { for (let i = 0; i < t.length; i += 2) p.push([t[i] / 3 - 7 + s * 395, (t[i + 1] - center[ch]) / 3]); });
  const split = p[0][0];
  const wave = x => {
    let i = 0; while (i < p.length - 2 && p[i + 1][0] < x) i++;
    const f = Math.max(0, Math.min(1, (x - p[i][0]) / (p[i + 1][0] - p[i][0])));
    return p[i][1] + (p[i + 1][1] - p[i][1]) * (1 - Math.cos(Math.PI * f)) / 2;
  };
  let drift = 0;
  for (let x = 0; x < 694; x++) {
    if (x < split) {
      let i = 0; while (i < e.length - 2 && e[i + 1][0] < x) i++;
      const f = Math.max(0, Math.min(1, (x - e[i][0]) / (e[i + 1][0] - e[i][0])));
      const t0 = e[i][1] + (e[i + 1][1] - e[i][1]) * f, b0 = e[i][2] + (e[i + 1][2] - e[i][2]) * f;
      const near = e.some(q => Math.abs(q[0] - x) < .6);
      drift += .55 + .6 * rnd();
      const ph = Math.sin(drift);
      const depth = x < 60 ? .3 : x > split - 50 ? .8 : .7;
      const up = 1 - depth * Math.max(0, -ph), dn = 1 - depth * Math.max(0, ph);
      const t = t0 * (near ? 1.05 : (.5 + .45 * rnd()) * up), b = b0 * (near ? 1.05 : (.5 + .45 * rnd()) * dn);
      if (x < 45) cols.push([t0 * .8, b0 * .8, t0 * .7, b0 * .7]);
      else cols.push([t, b, Math.max(t, t0 * (.2 + .55 * rnd()) * up), Math.min(b, b0 * (.2 + .55 * rnd()) * dn)]);
    } else {
      const mix = Math.max(0, 1 - (x - split) / 45);
      const a = wave(x - .3), b = wave(x + .9), j = (x < 310 ? 5 : x < 450 ? 3.4 : x < 500 ? 2 : .5) * rnd() + .5;
      const t = Math.min(a, b) - j - mix * 13 * rnd(), d = Math.max(a, b) + j * (.4 + rnd() * .6) + mix * 13 * rnd();
      const cut = d - t > 12 ? .2 * (d - t) * rnd() : 0;
      cols.push([t, d, t + cut, d - cut]);
    }
  }
  return cols;
}
const chans = [columns(0), columns(1)];
const g = document.getElementById('waves').getContext('2d');
g.fillStyle = '#000'; g.fillRect(0, 0, 695, 325);
g.fillStyle = '#052005';
for (let k = 1; k <= 10; k++) g.fillRect(Math.round(k * 62.95), 0, 1, 325);
chans.forEach((cols, ch) => {
  const mid = 81.5 + ch * 162;
  g.fillStyle = '#052005';
  for (const a of [57, 40, 20]) { g.fillRect(0, mid - a - .5, 694, 1); g.fillRect(0, mid + a - .5, 694, 1); }
  g.fillStyle = '#642000'; g.fillRect(0, mid - .5, 694, 1);
  cols.forEach((c, x) => {
    const quiet = x > 515;
    g.fillStyle = quiet ? '#009565' : '#00784d';
    g.fillRect(x, Math.round(mid + c[0]), 1, Math.max(1, Math.round(c[1] - c[0])));
    g.fillStyle = quiet ? '#00b77d' : '#00df94';
    g.fillRect(x, Math.round(mid + c[2]), 1, Math.max(quiet ? 0 : 1, Math.round(c[3] - c[2])));
  });
});
g.fillStyle = '#565656'; g.fillRect(0, 162, 694, 1);
g.fillStyle = '#8a1c0c'; for (let y = 0; y < 325; y += 5) g.fillRect(0, y, 1, 2);
g.fillStyle = '#c4000c'; g.fillRect(694, 0, 1, 325);

// Overview strip
const o = document.getElementById('overview').getContext('2d');
o.fillStyle = '#2e2e2e'; o.strokeStyle = '#656565'; o.lineWidth = 2;
o.beginPath(); o.roundRect(3, 8, 694, 28, 3); o.fill(); o.stroke();
chans.forEach((cols, ch) => cols.forEach((c, x) => {
  o.fillStyle = x > 45 && x < 380 ? '#00f5ac' : x < 430 ? '#17c78f' : '#1d9470';
  const t = c[0] * .085, b = c[1] * .085;
  o.fillRect(x + 3, Math.round(15 + ch * 14 + t), 1, Math.max(1, Math.round(b - t)));
}));
o.fillStyle = '#484848'; o.strokeStyle = '#777'; o.lineWidth = 1.5;
for (const x of [1, 694]) { o.beginPath(); o.roundRect(x, 11, 5, 23, 2); o.fill(); o.stroke(); }

// Spectral display: smoothed noise over an attack and decay profile
const W = 694, H = 108;
const stops = [[0,0,0,0],[.1,14,0,24],[.22,40,0,58],[.34,84,0,64],[.44,140,0,40],[.54,205,0,4],[.62,252,0,0],[.73,255,45,0],[.8,255,130,0],[.9,255,190,0],[1,255,228,0]];
function colour(v) {
  v = Math.max(0, Math.min(1, v));
  let i = 0; while (i < stops.length - 2 && stops[i + 1][0] < v) i++;
  const a = stops[i], b = stops[i + 1], f = (v - a[0]) / (b[0] - a[0]);
  return [1, 2, 3].map(k => a[k] + (b[k] - a[k]) * f);
}
function lattice(sx, sy) {
  const nx = Math.ceil(W / sx) + 2, ny = Math.ceil(H / sy) + 2, v = Array.from({ length: nx * ny }, rnd);
  return (x, y) => {
    x /= sx; y /= sy;
    const i = x | 0, j = y | 0, f = x - i, h = y - j, at = (a, b) => v[b * nx + a];
    return (at(i, j) * (1 - f) + at(i + 1, j) * f) * (1 - h) + (at(i, j + 1) * (1 - f) + at(i + 1, j + 1) * f) * h - .5;
  };
}
const ss = (a, b, x) => { x = Math.max(0, Math.min(1, (x - a) / (b - a))); return x * x * (3 - 2 * x); };
const s = document.getElementById('spectra').getContext('2d');
s.fillStyle = '#000'; s.fillRect(0, 0, 695, 234);
for (const top of [8, 125]) {
  const n1 = lattice(3.4, 1.8), n2 = lattice(2, 1.3), n3 = lattice(14, 7), img = s.createImageData(W, H);
  for (let y = 0; y < H; y++) for (let x = 0; x < W; x++) {
    const u = x / W, w = y / H;
    let v = .14 + .51 * ss(-.03, .13 - .03 * w, u);
    v += .165 * Math.exp(-Math.pow((u - (.37 - .16 * w)) / (.1 + .05 * w), 2)) * ss(-.2, .35, w + .05);
    v += .06 * Math.exp(-Math.pow((u - .2) / .09, 2)) * ss(.45, .85, w);
    v -= .03 * ss(.42, .6, u) + .29 * ss(.54, .86, u) + .11 * ss(.78, 1, u);
    v -= (1 - ss(0, .12 + .2 * u, w)) * (.05 + .2 * u) * ss(-.15, .3, u + .1);
    v -= (1 - ss(0, .15, w)) * (1 - ss(0, .15, u)) * .15;
    v += .07 * Math.exp(-Math.pow((w - .48) / .2, 2)) * ss(.7, .9, u);
    v += (n1(x, y) * .27 + n2(x, y) * .14 + n3(x, y) * .08) * (.6 + .4 * ss(0, .3, v));
    if (w > .94) v += .28 * (1 - ss(.02, .12, u)) * ss(0, .03, u);
    if (y > H - 4) v = Math.max(v, (y > H - 3 ? .92 : .76) - .12 * ss(.85, 1, u) - .2 * (1 - ss(0, .12, u)) + n1(x, y) * .2);
    if (u > .994) v += .12 * w;
    const c = colour(v), q = (y * W + x) * 4;
    img.data[q] = c[0]; img.data[q + 1] = c[1]; img.data[q + 2] = c[2]; img.data[q + 3] = 255;
  }
  s.putImageData(img, 0, top);
}
s.fillStyle = '#888'; s.fillRect(0, 116, 694, 1);
s.fillStyle = '#ddd'; for (let y = 0; y < 234; y += 5) s.fillRect(0, y, 1, 2);
s.fillStyle = '#f4b9b9'; s.fillRect(694, 0, 1, 234);
```
